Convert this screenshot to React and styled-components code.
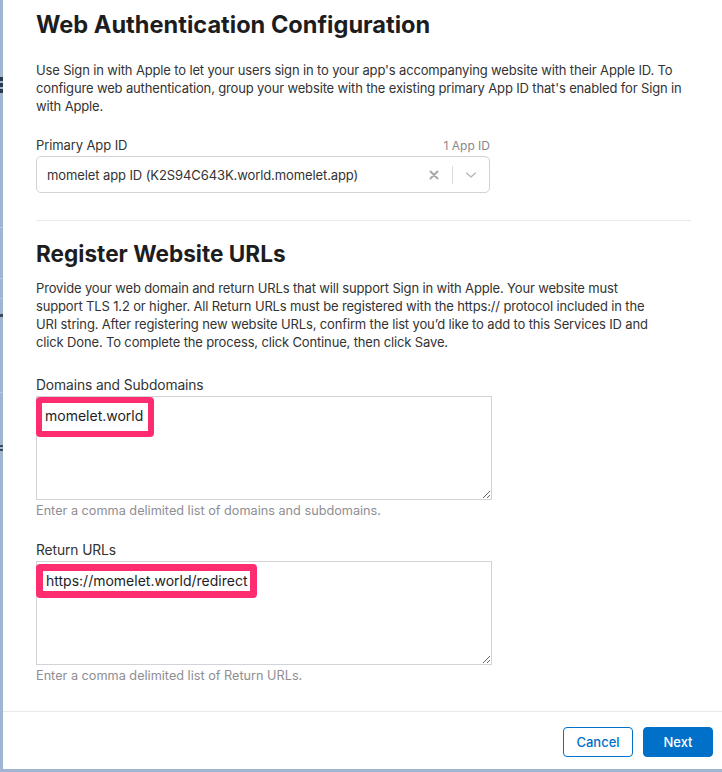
import React from "react";
import styled, { createGlobalStyle } from "styled-components";

const Global = createGlobalStyle`
  html, body { margin: 0; padding: 0; }
  body {
    background: #9fb5d0;
    font-family: Inter, "Helvetica Neue", "Liberation Sans", Arial, sans-serif;
    -webkit-font-smoothing: antialiased;
  }
`;

const Page = styled.div`
  width: 722px;
  height: 772px;
  display: flex;
  position: relative;
  overflow: hidden;
`;

const Backdrop = styled.div`
  width: 3px;
  flex: none;
  position: relative;
`;

const Mark = styled.div`
  position: absolute;
  left: 0;
  width: 3px;
  height: ${(p) => p.$h}px;
  top: ${(p) => p.$y}px;
  background: ${(p) => p.$c};
`;

const Modal = styled.div`
  width: 719px;
  height: 769px;
  background: #fff;
  display: flex;
  flex-direction: column;
  color: #333;
`;

const Body = styled.div`
  flex: 1;
  padding: 11px 31px 0 33px;
  display: flex;
  flex-direction: column;
`;

const Title = styled.h1`
  margin: 0;
  font-size: 23.6px;
  line-height: 28px;
  font-weight: 700;
  color: #1d1d1f;
`;

const SubTitle = styled.h2`
  margin: 20px 0 0;
  font-size: 22.6px;
  line-height: 26px;
  font-weight: 700;
  color: #1d1d1f;
`;

const Para = styled.p`
  margin: ${(p) => p.$mt}px 0 0;
  max-width: ${(p) => p.$max || 655}px;
  font-size: 13px;
  line-height: 18px;
  color: #333;
  letter-spacing: -0.15px;
`;

const Field = styled.div`
  width: 456px;
  margin-top: ${(p) => p.$mt}px;
  display: flex;
  flex-direction: column;
`;

const LabelRow = styled.div`
  display: flex;
  justify-content: space-between;
  align-items: baseline;
  height: 16px;
  margin-bottom: 3px;
`;

const Label = styled.label`
  font-size: ${(p) => p.$size || 13}px;
  line-height: 16px;
  color: #333;
  letter-spacing: -0.1px;
`;

const Count = styled.span`
  font-size: 12px;
  line-height: 16px;
  color: #888;
  padding-right: 2px;
`;

const Select = styled.div`
  width: 454px;
  height: 37px;
  box-sizing: border-box;
  border: 1px solid #d2d2d7;
  border-radius: 5px;
  display: flex;
  align-items: center;
  padding-left: 10px;
  font-size: 13px;
  color: #333;
  letter-spacing: -0.1px;
`;

const SelectValue = styled.span`
  flex: 1;
`;

const Indicators = styled.div`
  display: flex;
  align-items: center;
  height: 100%;
`;

const IconBox = styled.div`
  width: ${(p) => p.$w}px;
  display: flex;
  align-items: center;
  justify-content: center;
`;

const Sep = styled.div`
  width: 1px;
  height: 18px;
  background: #dcdcdc;
`;

const Divider = styled.hr`
  margin: 27px 0 0;
  border: 0;
  border-top: 1px solid #e8e8ed;
  width: 655px;
`;

const AreaWrap = styled.div`
  position: relative;
  width: 456px;
  height: 104px;
`;

const Area = styled.textarea`
  width: 456px;
  height: 104px;
  box-sizing: border-box;
  border: 1px solid #d2d2d7;
  border-radius: 0;
  margin: 0;
  padding: 6px 8px;
  font-family: inherit;
  font-size: 14px;
  outline: none;
  resize: both;
  background: #fff;
  display: block;
`;

const Highlight = styled.div`
  position: absolute;
  left: 0;
  top: ${(p) => p.$top}px;
  border: ${(p) => p.$bw}px solid #ff2d6f;
  border-radius: 4px;
  background: #fff;
  padding: ${(p) => p.$pad};
  font-size: 14px;
  line-height: 17px;
  color: #1d1d1f;
  white-space: nowrap;
`;

const Hint = styled.div`
  margin-top: 3px;
  font-size: 12.7px;
  line-height: 16px;
  color: #8e8e93;
`;

const Footer = styled.div`
  border-top: 1px solid #e8e8ed;
  height: 58px;
  box-sizing: border-box;
  padding: 15px 9px 0 0;
  display: flex;
  justify-content: flex-end;
  gap: 10px;
`;

const Button = styled.button`
  width: 70px;
  height: 30px;
  box-sizing: border-box;
  border-radius: 4px;
  border: 1px solid #0070c9;
  background: ${(p) => (p.$primary ? "#0070c9" : "#fff")};
  color: ${(p) => (p.$primary ? "#fff" : "#0070c9")};
  font-family: inherit;
  font-size: 13px;
  font-weight: 500;
  cursor: pointer;
  padding: 0;
`;

export default function App() {
  return (
    <>
      <Global />
      <Page>
        <Backdrop>
          <Mark $y={77} $h={4} $c="#2b3a4c" />
          <Mark $y={83} $h={4} $c="#2b3a4c" />
          <Mark $y={89} $h={4} $c="#2b3a4c" />
          <Mark $y={227} $h={1} $c="#b8c8da" />
          <Mark $y={278} $h={1} $c="#b8c8da" />
          <Mark $y={298} $h={1} $c="#b8c8da" />
          <Mark $y={314} $h={3} $c="#3d4b5c" />
          <Mark $y={392} $h={1} $c="#b8c8da" />
          <Mark $y={445} $h={2} $c="#3d4b5c" />
          <Mark $y={449} $h={2} $c="#3d4b5c" />
        </Backdrop>
        <Modal>
          <Body>
            <Title>Web Authentication Configuration</Title>
            <Para $mt={22}>
              Use Sign in with Apple to let your users sign in to your app's accompanying website with their Apple ID. To
              configure web authentication, group your website with the existing primary App ID that's enabled for Sign in
              with Apple.
            </Para>
            <Field $mt={22}>
              <LabelRow>
                <Label>Primary App ID</Label>
                <Count>1 App ID</Count>
              </LabelRow>
              <Select>
                <SelectValue>momelet app ID (K2S94C643K.world.momelet.app)</SelectValue>
                <Indicators>
                  <IconBox $w={36}>
                    <svg width="10" height="10" viewBox="0 0 10 10">
                      <path d="M1.5 1.5 L8.5 8.5 M8.5 1.5 L1.5 8.5" stroke="#a8a8ad" strokeWidth="2" strokeLinecap="round" />
                    </svg>
                  </IconBox>
                  <Sep />
                  <IconBox $w={36}>
                    <svg width="12" height="8" viewBox="0 0 12 8">
                      <path d="M1.5 2 L6 6 L10.5 2" stroke="#b8b8bd" strokeWidth="1.4" fill="none" strokeLinecap="round" strokeLinejoin="round" />
                    </svg>
                  </IconBox>
                </Indicators>
              </Select>
            </Field>
            <Divider />
            <SubTitle>Register Website URLs</SubTitle>
            <Para $mt={12} $max={625}>
              Provide your web domain and return URLs that will support Sign in with Apple. Your website must
              support TLS 1.2 or higher. All Return URLs must be registered with the https:// protocol included in the
              URI string. After registering new website URLs, confirm the list you’d like to add to this Services ID and
              click Done. To complete the process, click Continue, then click Save.
            </Para>
            <Field $mt={26}>
              <LabelRow>
                <Label $size={13.8}>Domains and Subdomains</Label>
              </LabelRow>
              <AreaWrap>
                <Area readOnly defaultValue="" aria-label="Domains and Subdomains" />
                <Highlight $top={1} $bw={6} $pad="4px 5px 7px 3px">momelet.world</Highlight>
              </AreaWrap>
              <Hint>Enter a comma delimited list of domains and subdomains.</Hint>
            </Field>
            <Field $mt={23}>
              <LabelRow>
                <Label $size={13.8}>Return URLs</Label>
              </LabelRow>
              <AreaWrap>
                <Area readOnly defaultValue="" aria-label="Return URLs" />
                <Highlight $top={3} $bw={7} $pad="1px 3px 2px 3px">https://momelet.world/redirect</Highlight>
              </AreaWrap>
              <Hint>Enter a comma delimited list of Return URLs.</Hint>
            </Field>
          </Body>
          <Footer>
            <Button>Cancel</Button>
            <Button $primary>Next</Button>
          </Footer>
        </Modal>
      </Page>
    </>
  );
}
